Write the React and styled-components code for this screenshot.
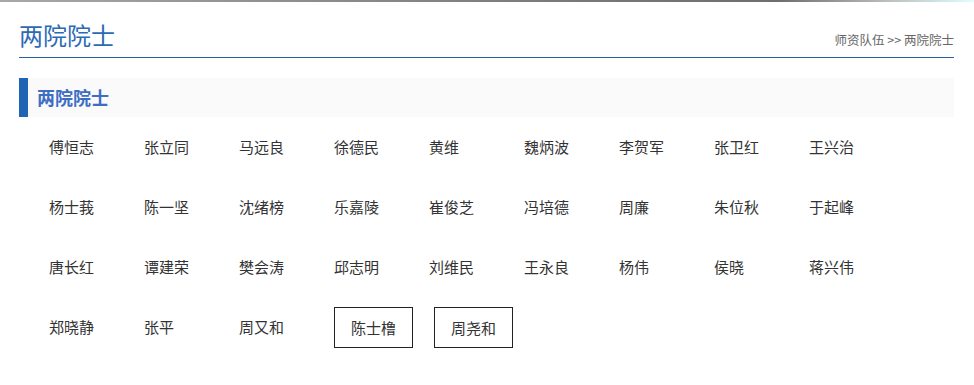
import styled, { createGlobalStyle } from "styled-components";

const names = [
  "傅恒志", "张立同", "马远良", "徐德民", "黄维", "魏炳波", "李贺军", "张卫红", "王兴治",
  "杨士莪", "陈一坚", "沈绪榜", "乐嘉陵", "崔俊芝", "冯培德", "周廉", "朱位秋", "于起峰",
  "唐长红", "谭建荣", "樊会涛", "邱志明", "刘维民", "王永良", "杨伟", "侯晓", "蒋兴伟",
  "郑晓静", "张平", "周又和",
];

const boxed = ["陈士橹", "周尧和"];

export default function App() {
  return (
    <>
      <GlobalStyle />
      <TopStrip />
      <Page>
        <Header>
          <Title>两院院士</Title>
          <Crumbs>师资队伍 &gt;&gt; 两院院士</Crumbs>
        </Header>
        <SectionBar>两院院士</SectionBar>
        <NameList>
          {names.map((n) => (
            <Name key={n}>{n}</Name>
          ))}
          {boxed.map((n) => (
            <Name key={n} $boxed>
              {n}
            </Name>
          ))}
        </NameList>
      </Page>
    </>
  );
}

const GlobalStyle = createGlobalStyle`
  body {
    margin: 0;
    background: #fff;
    font-family: "Noto Sans CJK SC", "Noto Sans", sans-serif;
  }
`;

const TopStrip = styled.div`
  height: 2px;
  background: linear-gradient(
    90deg,
    #a8a8a8 0%,
    #8e8e8e 30%,
    #787878 60%,
    #6e6e6e 80%,
    #bfc4c4 92%,
    #e0ffff 100%
  );
`;

const Page = styled.div`
  padding: 0 20px 0 19px;
`;

const Header = styled.div`
  display: flex;
  justify-content: space-between;
  align-items: flex-end;
  padding: 15px 0 4px;
  border-bottom: 1px solid #2b5e9f;
`;

const Title = styled.h1`
  margin: 0;
  font-size: 24px;
  font-weight: normal;
  line-height: 36px;
  color: #2c6ab4;
`;

const Crumbs = styled.div`
  font-size: 12.5px;
  line-height: 26px;
  color: #666;
`;

const SectionBar = styled.h2`
  margin: 20px 0 0;
  height: 39px;
  line-height: 39px;
  padding-left: 9px;
  border-left: 9px solid #2064b6;
  background: #fafafa;
  font-size: 18px;
  font-weight: bold;
  color: #3e6ec4;
`;

const NameList = styled.ul`
  list-style: none;
  margin: 0;
  padding: 0 0 0 30px;
  display: flex;
  flex-wrap: wrap;
  align-items: center;
`;

const Name = styled.li`
  box-sizing: border-box;
  font-size: 15px;
  color: #333;
  white-space: nowrap;
  height: ${(p) => (p.$boxed ? "41px" : "60px")};
  line-height: ${(p) => (p.$boxed ? "39px" : "60px")};
  width: ${(p) => (p.$boxed ? "auto" : "95px")};
  padding: ${(p) => (p.$boxed ? "0 16px" : "0")};
  margin-right: ${(p) => (p.$boxed ? "21px" : "0")};
  border: ${(p) => (p.$boxed ? "1px solid #222" : "none")};
`;
